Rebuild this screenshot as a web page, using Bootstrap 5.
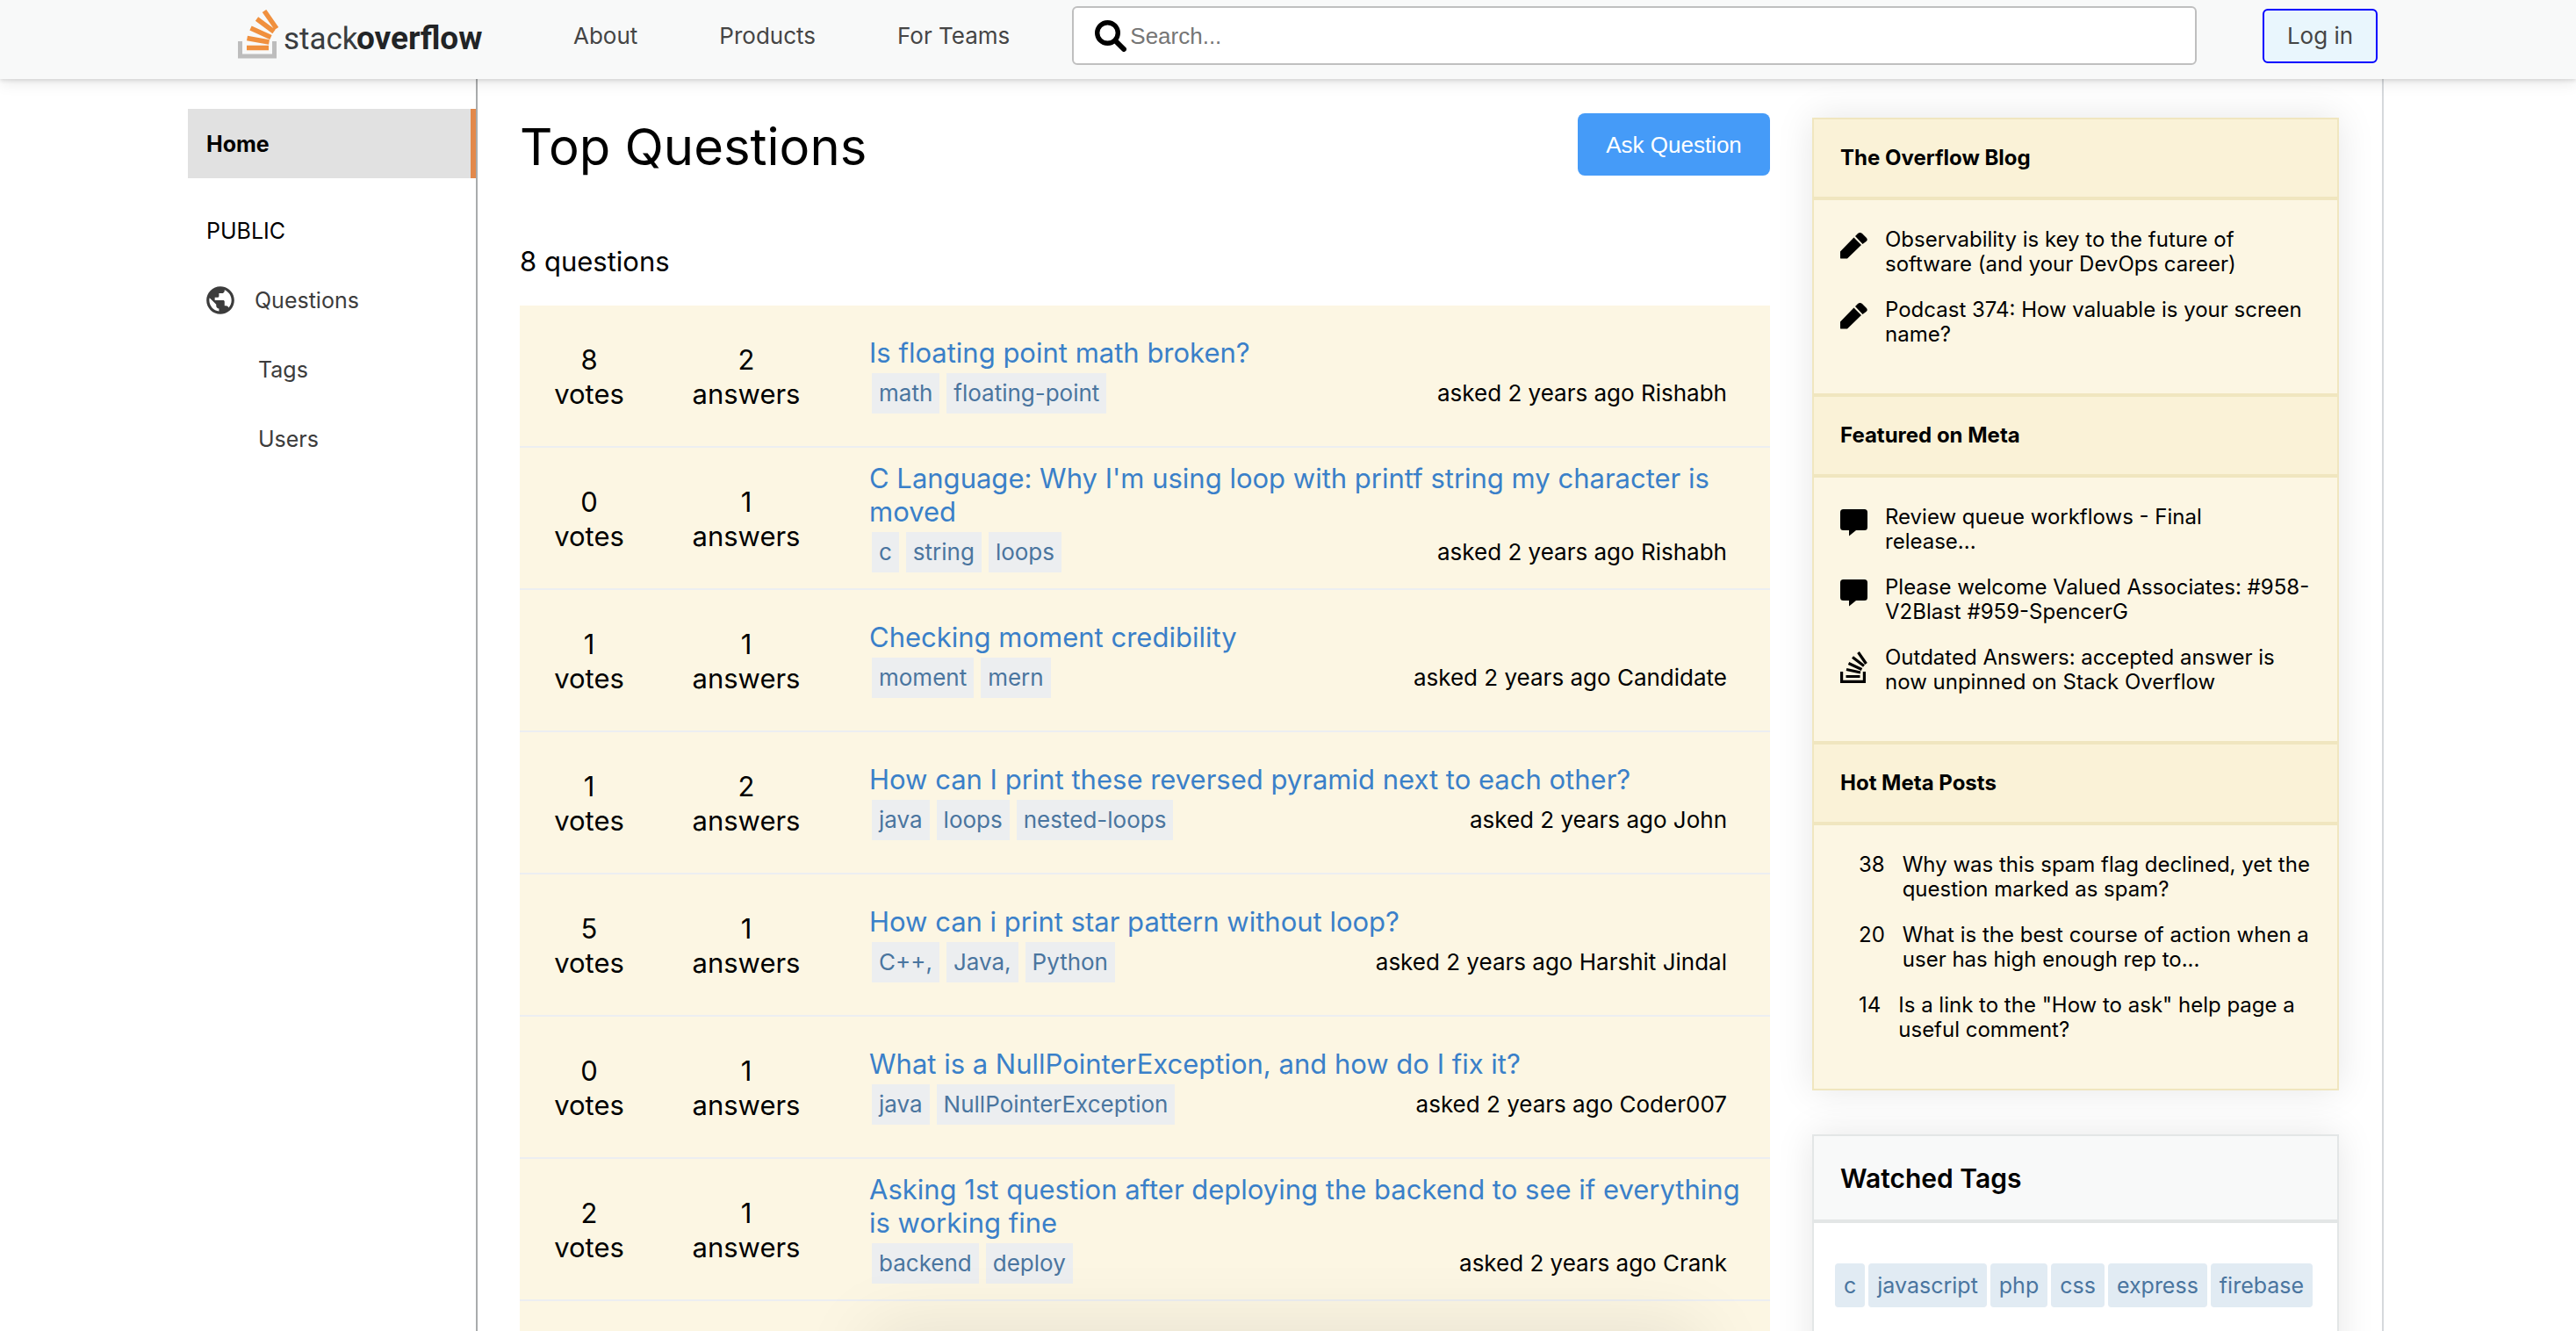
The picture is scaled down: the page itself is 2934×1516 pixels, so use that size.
<!DOCTYPE html>
<html lang="en">
<head>
<meta charset="utf-8">
<meta name="viewport" content="width=device-width, initial-scale=1">
<title>Stack Overflow</title>
<link href="https://cdn.jsdelivr.net/npm/bootstrap@5.3.0/dist/css/bootstrap.min.css" rel="stylesheet">
<style>
  body { font-family: Inter, "Liberation Sans", sans-serif; font-size: 26px; line-height: 32px; color: #000; background: #fff; height: 100vh; overflow: hidden; }
  a { text-decoration: none; }
  .topbar { background: #f8f9f9; height: 90px; padding: 7px 226px 16px 271px; box-shadow: 0 2px 4px rgba(0,0,0,.1), 0 4px 16px rgba(0,0,0,.1); position: relative; z-index: 5; }
  .logo { width: 280px; height: 56px; }
  .topnav { margin-left: 102px; gap: 93px; }
  .topnav a { color: #454545; }
  .searchbox { height: 67px; margin-left: 71px; margin-right: 75px; border: 2px solid #bfbfbf; border-radius: 6px; background: #fff; padding: 0 24px; }
  .searchbox input { font: 26px/32px "Liberation Sans", sans-serif; border: 0; outline: 0; background: none; padding: 0; margin-left: 4px; }
  .searchbox input::placeholder { color: #757575; }
  .login { height: 62px; width: 131px; border: 2px solid #00f; border-radius: 6px; background: #e9f6fd; color: #454545; padding: 0; }
  .shell { padding: 0 219px 0 214px; height: calc(100% - 90px); overflow: hidden; }
  .side { width: 330px; border-right: 2px solid #a9abac; padding-top: 34px; }
  .side a, .side h2 { height: 79px; padding-left: 21px; margin: 0; font-size: 25px; line-height: 32px; font-weight: 400; display: flex; align-items: center; color: #3c3c3c; }
  .side h2 { color: #000; margin-top: 20px; }
  .side a.active { background: #e1e1e1; border-right: 6px solid #e2884a; color: #000; font-weight: 700; }
  .side a.sub { padding-left: 80px; }
  .globe { margin-left: -3px; margin-right: 20px; }
  .content { border-right: 2px solid #d6d9dc; padding: 0 49px 0 48px; gap: 48px; }
  .feed { padding-top: 39px; position: relative; min-width: 0; }
  .feed::after { content: ""; position: absolute; top: 100%; left: 400px; right: 80px; height: 80px; box-shadow: 0 0 84px rgba(0,0,0,.1); }
  .title { font-size: 58px; line-height: 76px; font-weight: 400; margin: 0; }
  .ask { width: 219px; height: 71px; background: #459bf8; color: #fff; border: 0; border-radius: 8px; font: 26px/32px "Liberation Sans", sans-serif; }
  .count { font-size: 31px; line-height: 38px; margin: 74px 0 31px; }
  .q { height: 162px; padding-top: 2px; background: #fcf6e3; border-bottom: 2px solid #eceef1; flex: none; }
  .stat { font-size: 31px; line-height: 39px; text-align: center; flex: none; }
  .votes { width: 158px; }
  .answers { width: 200px; }
  .qbody { margin-left: 40px; margin-right: 24px; min-width: 0; }
  .qbody h3 { font-size: 31px; line-height: 38px; margin: 0; font-weight: 400; }
  .qbody h3 a { color: #3a80c9; }
  .qmeta { height: 54px; gap: 8px; padding: 0 25px 0 3px; }
  .qtag { background: #eceef0; color: #4a759f; height: 46px; line-height: 46px; padding: 0 8px; }
  .rail { width: 600px; padding-top: 44px; }
  .widget { border: 2px solid #f0e6bf; background: #fcf6e3; box-shadow: 0 0 40px rgba(0,0,0,.1); font-size: 24px; line-height: 28px; }
  .widget h4 { font-size: 24px; line-height: 28px; font-weight: 700; margin: 0; height: 92px; padding: 0 30px; background: #faf2d7; border-bottom: 4px solid #f0e6bf; display: flex; align-items: center; }
  .widget ul { list-style: none; margin: 0; padding: 31px 20px 53px 30px; display: flex; flex-direction: column; gap: 24px; border-bottom: 4px solid #f0e6bf; }
  .widget ul:last-child { border-bottom: 0; }
  .widget li { display: flex; gap: 20px; min-height: 56px; }
  .widget svg { flex: none; width: 31px; height: 48px; }
  .widget ul.hot { padding-left: 51px; }
  .widget.watched { background: #fff; border-color: #e3e6e6; margin-top: 50px; height: 400px; }
  .widget.watched h4 { font-size: 30px; font-weight: 600; height: 99px; background: #f8f9f9; border-color: #e3e6e6; }
  .wtags { padding: 46px 24px; gap: 4px; }
  .wtag { background: #e1ebf3; color: #4a759f; border-radius: 4px; height: 50px; line-height: 50px; padding: 0 10px; font-size: 25px; }
</style>
<script src="https://cdn.jsdelivr.net/npm/bootstrap@5.3.0/dist/js/bootstrap.bundle.min.js"></script>
</head>
<body>
<svg class="d-none" aria-hidden="true">
  <symbol id="pencil" viewBox="0 6 31 48"><path d="M0 41V33.500L15.500 17.500L24 26L8 41.500H1.500Q0 41.500 0 41zM17 16L20 13Q22.500 10.800 25 13L29.500 17.500Q32 20 29.500 22L25.500 25z"/></symbol>
  <symbol id="comment" viewBox="0 3 31 48"><path d="M3.500 8H27.500Q31 8 31 11.500V28.500Q31 32 27.500 32H18L10 38.500V32H3.500Q0 32 0 28.500V11.500Q0 8 3.500 8z"/></symbol>
  <symbol id="stack" viewBox="0 4 31 48"><g fill="none" stroke="#000" stroke-width="3.200"><path d="M1.600 34V45.400H27.400V34M6.500 39.500H22.500M7 31.500L23 35M9.500 24.500L24.500 31.500M14 17.500L27 27.500M20.500 12L29.500 25"/></g></symbol>
</svg>
<header class="topbar d-flex align-items-center">
  <a class="mb-1" href="#" aria-label="Stack Overflow">
    <svg class="logo d-block" viewBox="0 0 280 56">
      <path d="M2.500 36V53H41.500V36" fill="none" stroke="#bdbdbd" stroke-width="5"/>
      <g stroke="#f0903e" stroke-width="5.500"><path d="M10 43.500H35M10.500 32.500L35.500 37M14.500 21L37.500 31.500M21.500 10.500L41 25M30 1.500L44 21.500"/></g>
      <text x="52" y="45" font-family="Roboto" font-size="35" fill="#3a3d40">stack</text>
      <text x="135" y="45" font-family="Roboto" font-weight="700" font-size="37" fill="#222426">overflow</text>
    </svg>
  </a>
  <nav class="topnav d-flex"><a href="#">About</a><a href="#">Products</a><a href="#">For Teams</a></nav>
  <form class="searchbox d-flex align-items-center flex-grow-1">
    <svg width="36" height="36" viewBox="0 0 36 36" aria-hidden="true"><circle cx="14.500" cy="14.500" r="11.800" fill="none" stroke="#000" stroke-width="5.400"/><path d="M23.500 23.500L33 33" stroke="#000" stroke-width="6" stroke-linecap="round"/></svg>
    <input class="flex-grow-1" type="text" placeholder="Search..." aria-label="Search">
  </form>
  <button class="login" type="button">Log in</button>
</header>
<div class="shell d-flex">
  <nav class="side flex-shrink-0">
    <a class="active" href="#">Home</a>
    <h2>PUBLIC</h2>
    <a href="#"><svg class="globe" width="38" height="38" viewBox="0 0 24 24" fill="#3c3c3c"><path d="M12 2C6.480 2 2 6.480 2 12s4.480 10 10 10 10-4.480 10-10S17.520 2 12 2zm-1 17.930c-3.950-.49-7-3.850-7-7.930 0-.62.080-1.210.21-1.790L9 15v1c0 1.100.9 2 2 2v1.930zm6.900-2.540c-.26-.81-1-1.390-1.900-1.390h-1v-3c0-.55-.45-1-1-1H8v-2h2c.55 0 1-.45 1-1V7h2c1.100 0 2-.9 2-2v-.41c2.930 1.190 5 4.060 5 7.410 0 2.080-.8 3.970-2.100 5.390z"/></svg>Questions</a>
    <a class="sub" href="#">Tags</a>
    <a class="sub" href="#">Users</a>
  </nav>
  <div class="content d-flex flex-grow-1">
    <main class="feed flex-grow-1 d-flex flex-column overflow-hidden">
      <div class="d-flex justify-content-between">
        <h1 class="title">Top Questions</h1>
        <button class="ask" type="button">Ask Question</button>
      </div>
      <div class="count">8 questions</div>
      <article class="q d-flex align-items-center">
        <div class="stat votes">8<br>votes</div><div class="stat answers">2<br>answers</div>
        <div class="qbody flex-grow-1"><h3><a href="#">Is floating point math broken?</a></h3>
          <div class="qmeta d-flex align-items-center"><span class="qtag">math</span><span class="qtag">floating-point</span><span class="ms-auto">asked 2 years ago Rishabh</span></div></div>
      </article>
      <article class="q d-flex align-items-center">
        <div class="stat votes">0<br>votes</div><div class="stat answers">1<br>answers</div>
        <div class="qbody flex-grow-1"><h3><a href="#">C Language: Why I'm using loop with printf string my character is moved</a></h3>
          <div class="qmeta d-flex align-items-center"><span class="qtag">c</span><span class="qtag">string</span><span class="qtag">loops</span><span class="ms-auto">asked 2 years ago Rishabh</span></div></div>
      </article>
      <article class="q d-flex align-items-center">
        <div class="stat votes">1<br>votes</div><div class="stat answers">1<br>answers</div>
        <div class="qbody flex-grow-1"><h3><a href="#">Checking moment credibility</a></h3>
          <div class="qmeta d-flex align-items-center"><span class="qtag">moment</span><span class="qtag">mern</span><span class="ms-auto">asked 2 years ago Candidate</span></div></div>
      </article>
      <article class="q d-flex align-items-center">
        <div class="stat votes">1<br>votes</div><div class="stat answers">2<br>answers</div>
        <div class="qbody flex-grow-1"><h3><a href="#">How can I print these reversed pyramid next to each other?</a></h3>
          <div class="qmeta d-flex align-items-center"><span class="qtag">java</span><span class="qtag">loops</span><span class="qtag">nested-loops</span><span class="ms-auto">asked 2 years ago John</span></div></div>
      </article>
      <article class="q d-flex align-items-center">
        <div class="stat votes">5<br>votes</div><div class="stat answers">1<br>answers</div>
        <div class="qbody flex-grow-1"><h3><a href="#">How can i print star pattern without loop?</a></h3>
          <div class="qmeta d-flex align-items-center"><span class="qtag">C++,</span><span class="qtag">Java,</span><span class="qtag">Python</span><span class="ms-auto">asked 2 years ago Harshit Jindal</span></div></div>
      </article>
      <article class="q d-flex align-items-center">
        <div class="stat votes">0<br>votes</div><div class="stat answers">1<br>answers</div>
        <div class="qbody flex-grow-1"><h3><a href="#">What is a NullPointerException, and how do I fix it?</a></h3>
          <div class="qmeta d-flex align-items-center"><span class="qtag">java</span><span class="qtag">NullPointerException</span><span class="ms-auto">asked 2 years ago Coder007</span></div></div>
      </article>
      <article class="q d-flex align-items-center">
        <div class="stat votes">2<br>votes</div><div class="stat answers">1<br>answers</div>
        <div class="qbody flex-grow-1"><h3><a href="#">Asking 1st question after deploying the backend to see if everything is working fine</a></h3>
          <div class="qmeta d-flex align-items-center"><span class="qtag">backend</span><span class="qtag">deploy</span><span class="ms-auto">asked 2 years ago Crank</span></div></div>
      </article>
      <article class="q"></article>
    </main>
    <aside class="rail flex-shrink-0">
      <section class="widget">
        <h4>The Overflow Blog</h4>
        <ul>
          <li><svg><use href="#pencil"/></svg><span>Observability is key to the future of software (and your DevOps career)</span></li>
          <li><svg><use href="#pencil"/></svg><span>Podcast 374: How valuable is your screen name?</span></li>
        </ul>
        <h4>Featured on Meta</h4>
        <ul>
          <li><svg><use href="#comment"/></svg><span>Review queue workflows - Final<br>release...</span></li>
          <li><svg><use href="#comment"/></svg><span>Please welcome Valued Associates: #958-<wbr>V2Blast #959-SpencerG</span></li>
          <li><svg><use href="#stack"/></svg><span>Outdated Answers: accepted answer is now unpinned on Stack Overflow</span></li>
        </ul>
        <h4>Hot Meta Posts</h4>
        <ul class="hot">
          <li><span>38</span><span>Why was this spam flag declined, yet the question marked as spam?</span></li>
          <li><span>20</span><span>What is the best course of action when a user has high enough rep to...</span></li>
          <li><span>14</span><span>Is a link to the "How to ask" help page a useful comment?</span></li>
        </ul>
      </section>
      <section class="widget watched">
        <h4>Watched Tags</h4>
        <div class="wtags d-flex"><span class="wtag">c</span><span class="wtag">javascript</span><span class="wtag">php</span><span class="wtag">css</span><span class="wtag">express</span><span class="wtag">firebase</span></div>
      </section>
    </aside>
  </div>
</div>
</body>
</html>
